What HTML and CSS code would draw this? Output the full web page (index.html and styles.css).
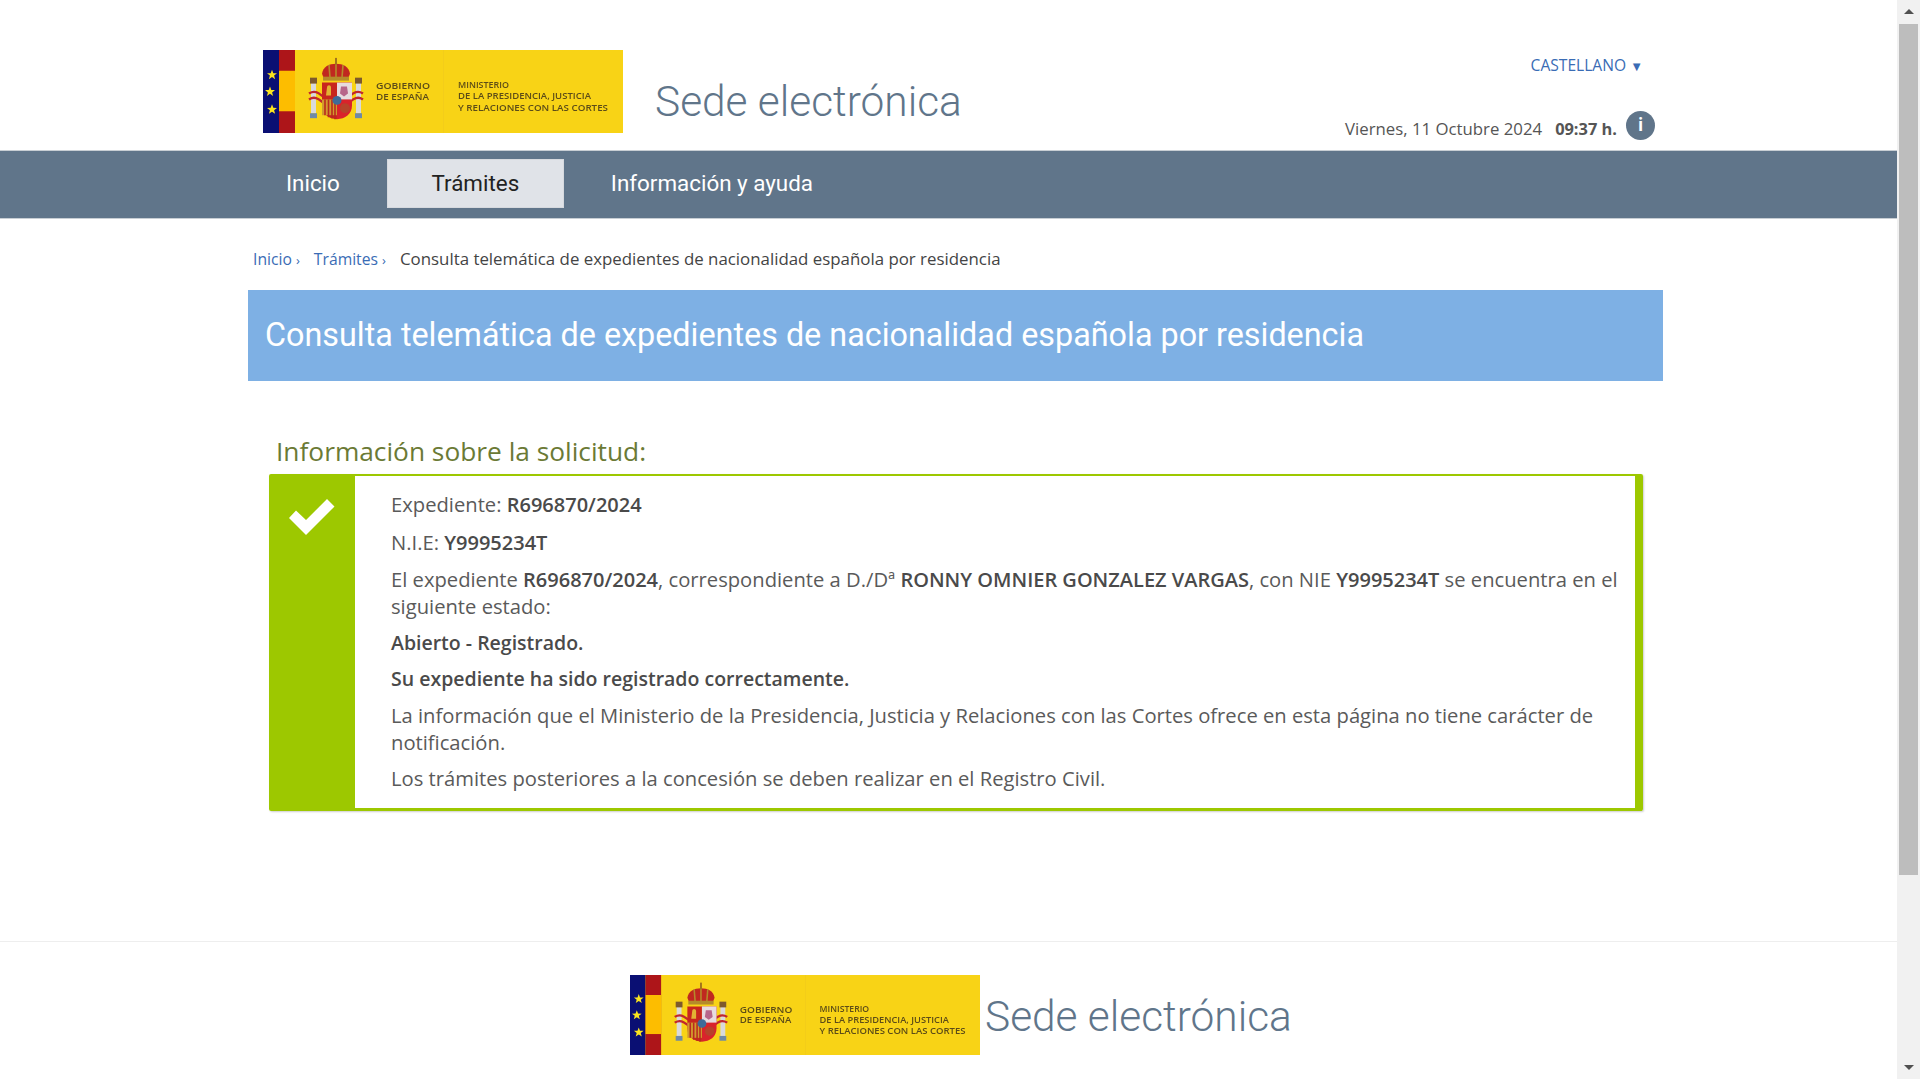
FILE: index.html
```html
<!DOCTYPE html>
<html>
  <head>
    <meta charset="utf-8" />
    <title>Sede electrónica</title>
    <link rel="stylesheet" href="styles.css">
  </head>
  <body>
    <div id="page">
      <div id="content">
        <header id="top">
          <svg class="logo" viewBox="0 0 360 84" preserveAspectRatio="none">
            <rect width="360" height="84" fill="#f8d316"/>
            <rect x="180" width="1" height="84" fill="#f3cd1a"/>
            <rect width="16" height="84" fill="#0a0f73"/>
            <rect x="16" width="16" height="84" fill="#ad1519"/>
            <rect x="16" y="21" width="16" height="41" fill="#fdbd00"/>
            <polygon fill="#fbe51f" points="9,20 10.3,23.5 14,23.6 11.1,25.9 12.1,29.500 9,27.4 5.9,29.500 6.9,25.9 4,23.6 7.7,23.5"/>
            <polygon fill="#fbe51f" points="7,37 8.3,40.5 12,40.6 9.1,42.9 10.1,46.500 7,44.4 3.9,46.500 4.9,42.9 2,40.6 5.7,40.5"/>
            <polygon fill="#fbe51f" points="9,55 10.3,58.5 14,58.6 11.1,60.9 12.1,64.500 9,62.4 5.9,64.500 6.9,60.9 4,58.6 7.7,58.5"/>
            <rect x="48" y="33" width="5" height="31" fill="#d9dadb"/>
            <rect x="93" y="33" width="5" height="31" fill="#d9dadb"/>
            <rect x="47" y="28" width="7" height="6" fill="#7d5a2c"/>
            <rect x="92" y="28" width="7" height="6" fill="#7d5a2c"/>
            <rect x="47" y="64" width="7" height="5" fill="#6f8aa6"/>
            <rect x="92" y="64" width="7" height="5" fill="#6f8aa6"/>
            <path d="M46 44 C52 40 56 44 60 47 M46 50 C52 46 56 50 60 53 M100 44 C94 40 90 44 86 47 M100 50 C94 46 90 50 86 53" stroke="#c1272d" stroke-width="2.400" fill="none"/>
            <path d="M59 24 C60 17 66 14 73 14 C80 14 86 17 87 24 L85 29 H61 Z" fill="#c0281f"/>
            <path d="M66 15 L67 28 M73 12 V28 M80 15 L79 28" stroke="#b58a2a" stroke-width="1.600" fill="none"/>
            <rect x="60" y="27" width="26" height="4" fill="#b58a2a"/>
            <rect x="72" y="8" width="2" height="7" fill="#a3741c"/>
            <path d="M59 33 H74 V70 C66 70 59 65 59 56 Z" fill="#c8261e"/>
            <path d="M74 33 H89 V56 C89 65 82 70 74 70 Z" fill="#d9232b"/>
            <rect x="74" y="33" width="15" height="17" fill="#e7dcdf"/>
            <path d="M78 37 L84 37 L85 44 L81 47 L77 44 Z" fill="#b7668a"/>
            <rect x="59" y="50" width="15" height="16" fill="#d19a2d"/>
            <path d="M62 50 V66 M65.500 50 V68 M69 50 V69 M72 50 V70" stroke="#ba2a1f" stroke-width="1.600"/>
            <path d="M64 38 C64 35 68 35 68 38 V46 H63 Z" fill="#e2b333"/>
            <circle cx="74" cy="51" r="4.500" fill="#3e6b99"/>
            <circle cx="82" cy="59" r="5" fill="#b8422a"/>
            <g class="logo-text">
              <text x="113" y="39.500" textLength="54" lengthAdjust="spacingAndGlyphs">GOBIERNO</text>
              <text x="113" y="50.500" textLength="53" lengthAdjust="spacingAndGlyphs">DE ESPAÑA</text>
              <text x="195" y="38.500" textLength="51" lengthAdjust="spacingAndGlyphs">MINISTERIO</text>
              <text x="195" y="50" textLength="133" lengthAdjust="spacingAndGlyphs">DE LA PRESIDENCIA, JUSTICIA</text>
              <text x="195" y="61.500" textLength="150" lengthAdjust="spacingAndGlyphs">Y RELACIONES CON LAS CORTES</text>
            </g>
          </svg>
          <div class="site-name">Sede electrónica</div>
          <div class="top-right">
            <a class="lang">CASTELLANO <span class="caret">▼</span></a>
            <div class="date-row">
              <span class="date">Viernes, 11 Octubre 2024</span>
              <strong class="time">09:37 h.</strong>
              <span class="info-btn">i</span>
            </div>
          </div>
        </header>

        <nav id="menu">
          <a>Inicio</a>
          <a class="active">Trámites</a>
          <a>Información y ayuda</a>
        </nav>

        <main id="main">
          <div class="crumbs">
            <a>Inicio <i>›</i></a>
            <a>Trámites <i>›</i></a>
            <span>Consulta telemática de expedientes de nacionalidad española por residencia</span>
          </div>
          <h1 class="page-title">Consulta telemática de expedientes de nacionalidad española por residencia</h1>
          <section class="result">
            <h2>Información sobre la solicitud:</h2>
            <div class="result-box">
              <div class="result-icon">
                <svg width="46" height="36" viewBox="0 0 46 36"><path fill="#fff" d="M0 19 L7 11.500 L17 21 L38 0 L45.500 7.500 L17 36 Z"/></svg>
              </div>
              <div class="result-text">
                <p class="gap-s">Expediente: <b>R696870/2024</b></p>
                <p class="gap-s">N.I.E: <b>Y9995234T</b></p>
                <p>El expediente <b>R696870/2024</b>, correspondiente a D./Dª <b>RONNY OMNIER GONZALEZ VARGAS</b>, con NIE <b>Y9995234T</b> se encuentra en el<br>siguiente estado:</p>
                <p class="state"><b>Abierto - Registrado.</b></p>
                <p class="state"><b>Su expediente ha sido registrado correctamente.</b></p>
                <p>La información que el Ministerio de la Presidencia, Justicia y Relaciones con las Cortes ofrece en esta página no tiene carácter de notificación.</p>
                <p>Los trámites posteriores a la concesión se deben realizar en el Registro Civil.</p>
              </div>
            </div>
          </section>
        </main>

        <footer id="foot">
          <svg class="logo-small" viewBox="0 0 360 84" preserveAspectRatio="none">
            <rect width="360" height="84" fill="#f8d316"/>
            <rect x="180" width="1" height="84" fill="#f3cd1a"/>
            <rect width="16" height="84" fill="#0a0f73"/>
            <rect x="16" width="16" height="84" fill="#ad1519"/>
            <rect x="16" y="21" width="16" height="41" fill="#fdbd00"/>
            <polygon fill="#fbe51f" points="9,20 10.3,23.5 14,23.6 11.1,25.9 12.1,29.500 9,27.4 5.9,29.500 6.9,25.9 4,23.6 7.7,23.5"/>
            <polygon fill="#fbe51f" points="7,37 8.3,40.5 12,40.6 9.1,42.9 10.1,46.500 7,44.4 3.9,46.500 4.9,42.9 2,40.6 5.7,40.5"/>
            <polygon fill="#fbe51f" points="9,55 10.3,58.5 14,58.6 11.1,60.9 12.1,64.500 9,62.4 5.9,64.500 6.9,60.9 4,58.6 7.7,58.5"/>
            <rect x="48" y="33" width="5" height="31" fill="#d9dadb"/>
            <rect x="93" y="33" width="5" height="31" fill="#d9dadb"/>
            <rect x="47" y="28" width="7" height="6" fill="#7d5a2c"/>
            <rect x="92" y="28" width="7" height="6" fill="#7d5a2c"/>
            <rect x="47" y="64" width="7" height="5" fill="#6f8aa6"/>
            <rect x="92" y="64" width="7" height="5" fill="#6f8aa6"/>
            <path d="M46 44 C52 40 56 44 60 47 M46 50 C52 46 56 50 60 53 M100 44 C94 40 90 44 86 47 M100 50 C94 46 90 50 86 53" stroke="#c1272d" stroke-width="2.400" fill="none"/>
            <path d="M59 24 C60 17 66 14 73 14 C80 14 86 17 87 24 L85 29 H61 Z" fill="#c0281f"/>
            <path d="M66 15 L67 28 M73 12 V28 M80 15 L79 28" stroke="#b58a2a" stroke-width="1.600" fill="none"/>
            <rect x="60" y="27" width="26" height="4" fill="#b58a2a"/>
            <rect x="72" y="8" width="2" height="7" fill="#a3741c"/>
            <path d="M59 33 H74 V70 C66 70 59 65 59 56 Z" fill="#c8261e"/>
            <path d="M74 33 H89 V56 C89 65 82 70 74 70 Z" fill="#d9232b"/>
            <rect x="74" y="33" width="15" height="17" fill="#e7dcdf"/>
            <path d="M78 37 L84 37 L85 44 L81 47 L77 44 Z" fill="#b7668a"/>
            <rect x="59" y="50" width="15" height="16" fill="#d19a2d"/>
            <path d="M62 50 V66 M65.500 50 V68 M69 50 V69 M72 50 V70" stroke="#ba2a1f" stroke-width="1.600"/>
            <path d="M64 38 C64 35 68 35 68 38 V46 H63 Z" fill="#e2b333"/>
            <circle cx="74" cy="51" r="4.500" fill="#3e6b99"/>
            <circle cx="82" cy="59" r="5" fill="#b8422a"/>
            <g class="logo-text">
              <text x="113" y="39.500" textLength="54" lengthAdjust="spacingAndGlyphs">GOBIERNO</text>
              <text x="113" y="50.500" textLength="53" lengthAdjust="spacingAndGlyphs">DE ESPAÑA</text>
              <text x="195" y="38.500" textLength="51" lengthAdjust="spacingAndGlyphs">MINISTERIO</text>
              <text x="195" y="50" textLength="133" lengthAdjust="spacingAndGlyphs">DE LA PRESIDENCIA, JUSTICIA</text>
              <text x="195" y="61.500" textLength="150" lengthAdjust="spacingAndGlyphs">Y RELACIONES CON LAS CORTES</text>
            </g>
          </svg>
          <div class="site-name">Sede electrónica</div>
        </footer>
      </div>

      <div id="scrollbar">
        <div class="arrow-up"></div>
        <div class="thumb"></div>
        <div class="arrow-down"></div>
      </div>
    </div>
  </body>
</html>
```

FILE: styles.css
```css
html {
  margin: 0px;
  padding: 0px;
}
body {
  font-family: 'Open Sans', 'Liberation Sans', sans-serif;
  margin: 0px;
  padding: 0px;
  color: #555;
  background-color: #fff;
  height: 100vh;
  overflow: hidden;
}
#page {
  display: flex;
  height: 1079px;
}
#content {
  flex: 1;
  display: flex;
  flex-direction: column;
  min-width: 0;
}

/* header */
#top {
  height: 150px;
  box-sizing: border-box;
  padding: 50px 0px 0px 263px;
  display: flex;
  align-items: flex-start;
}
.logo {
  width: 360px;
  height: 83px;
  flex: none;
  filter: blur(0.5px);
}
.logo-text text {
  font-family: 'Open Sans', sans-serif;
  font-size: 8.500px;
  font-weight: 600;
  fill: #5c4c18;
}
.site-name {
  font-family: 'Roboto', sans-serif;
  font-weight: 300;
  font-size: 42.400px;
  line-height: 50px;
  color: #60758a;
}
#top .site-name {
  margin: 27px 0px 0px 32px;
}
.top-right {
  margin-left: auto;
  width: 330px;
  margin-right: 242px;
  display: flex;
  flex-direction: column;
  align-items: flex-end;
}
.lang {
  font-size: 15.600px;
  line-height: 20px;
  color: #3a6cb5;
  margin: 5px 12px 0px 0px;
}
.caret {
  font-size: 13px;
}
.date-row {
  margin-top: 35px;
  display: flex;
  align-items: center;
  font-size: 16.800px;
  color: #555;
}
.date {
  margin-right: 13px;
  margin-top: 6px;
}
.time {
  font-weight: 700;
  font-size: 16.400px;
  margin-right: 9px;
  margin-top: 6px;
}
.info-btn {
  width: 29px;
  height: 29px;
  border-radius: 50%;
  background-color: #60758a;
  color: #fff;
  font-weight: 700;
  font-size: 17px;
  text-align: center;
  line-height: 28px;
}

/* menu */
#menu {
  height: 69px;
  box-sizing: border-box;
  background-color: #60758a;
  border-top: 1px solid #c8ced4;
  border-bottom: 1px solid #c8ced4;
  padding: 8px 0px 0px 286px;
  display: flex;
  align-items: flex-start;
  font-family: 'Roboto', sans-serif;
  font-size: 22.400px;
}
#menu a {
  color: #fff;
  height: 49px;
  line-height: 49px;
  margin-right: 47px;
}
#menu a.active {
  background-color: #e0e3e8;
  color: #222;
  width: 177px;
  text-align: center;
  box-sizing: border-box;
  border: 1px solid #d6d9de;
  line-height: 47px;
}

/* main */
#main {
  flex: 1;
  padding: 0px 234px 0px 248px;
}
.crumbs {
  font-size: 15.700px;
  height: 50px;
  box-sizing: border-box;
  line-height: 20px;
  padding: 30px 0px 0px 5px;
  color: #444;
  display: flex;
  gap: 14px;
}
.crumbs a {
  color: #3a6cb5;
}
.crumbs i {
  font-style: normal;
  font-size: 13px;
  line-height: 1;
}
.crumbs span {
  font-size: 16.850px;
}
.page-title {
  margin: 21px 0px 0px;
  height: 91px;
  background-color: #7eb0e4;
  color: #fff;
  font-family: 'Roboto', sans-serif;
  font-weight: 400;
  font-size: 32.350px;
  line-height: 90px;
  padding-left: 17px;
}
.result {
  padding: 0px 20px 0px 21px;
}
.result h2 {
  margin: 50px 0px 0px 7px;
  padding-bottom: 2px;
  font-weight: 400;
  font-size: 26.300px;
  line-height: 41px;
  color: #6b7a35;
}
.result-box {
  display: flex;
  height: 337px;
  box-sizing: border-box;
  border-top: 2px solid #9dc800;
  border-bottom: 3px solid #9dc800;
  border-right: 8px solid #9dc800;
  border-radius: 2px;
  box-shadow: 1px 1px 2px rgba(0, 0, 0, 0.2);
}
.result-icon {
  width: 86px;
  background-color: #9dc800;
  display: flex;
  justify-content: center;
  align-items: flex-start;
  padding-top: 23px;
  box-sizing: border-box;
}
.result-text {
  flex: 1;
  padding: 15px 10px 0px 36px;
  font-size: 20.200px;
  line-height: 27px;
  color: #5a5a5a;
}
.result-text p {
  margin: 0px 0px 9.400px;
}
.result-text p.gap-s {
  margin-bottom: 11px;
}
.result-text p.gap-s + p.gap-s {
  margin-bottom: 9.500px;
}
.result-text b {
  font-size: 20px;
  font-weight: 600;
  color: #4a4a4a;
}
.result-text p.state b {
  font-size: 19.500px;
}

/* footer */
#foot {
  height: 138px;
  box-sizing: border-box;
  border-top: 1px solid #eee;
  padding: 33px 0px 0px 630px;
  display: flex;
  align-items: flex-start;
}
.logo-small {
  width: 350px;
  height: 80px;
  flex: none;
  filter: blur(0.5px);
}
#foot .site-name {
  margin: 17px 0px 0px 5px;
}

/* drawn scrollbar */
#scrollbar {
  width: 23px;
  background-color: #f1f1f1;
  display: flex;
  flex-direction: column;
  align-items: center;
}
.arrow-up, .arrow-down {
  width: 0px;
  height: 0px;
  border-left: 5px solid transparent;
  border-right: 5px solid transparent;
}
.arrow-up {
  border-bottom: 5px solid #505050;
  margin: 9px 0px 10px;
}
.thumb {
  width: 19px;
  height: 851px;
  background-color: #bdbdbd;
}
.arrow-down {
  border-top: 5px solid #505050;
  margin-top: auto;
  margin-bottom: 9px;
}
```
